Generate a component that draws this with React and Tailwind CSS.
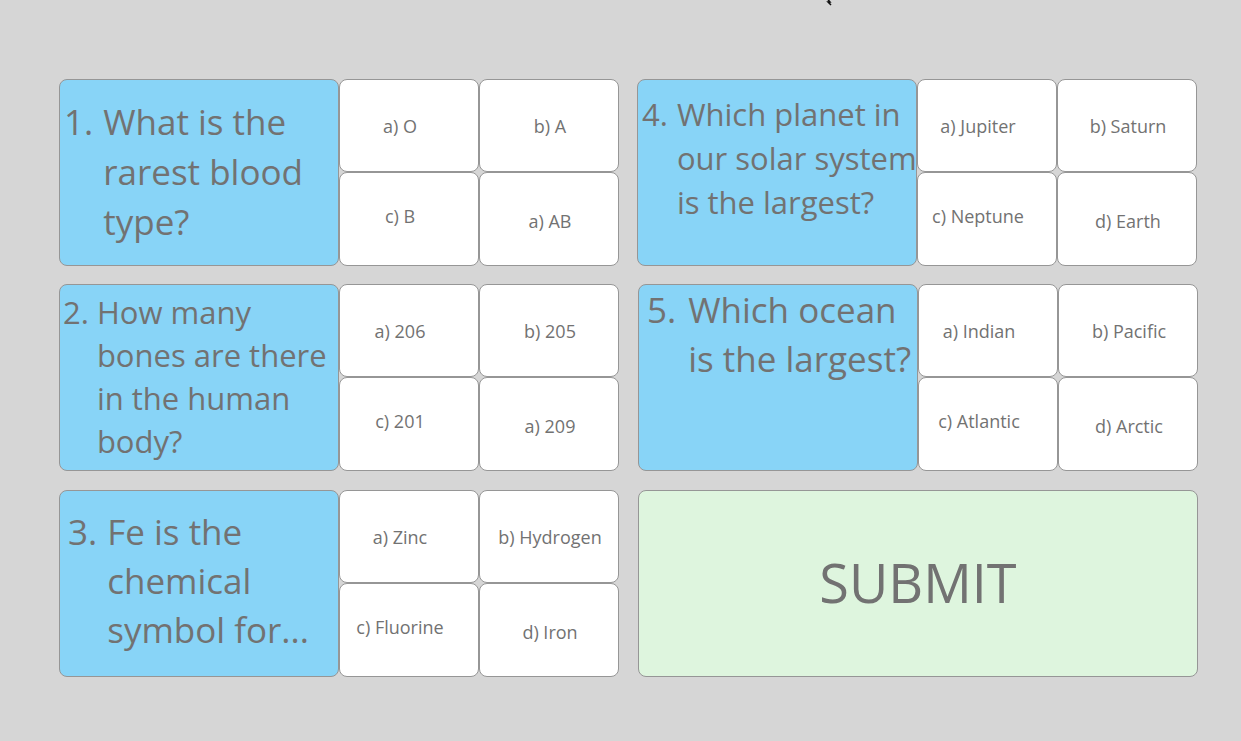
const quiz = [
  {
    n: '1.',
    lines: ['What is the', 'rarest blood', 'type?'],
    box: 'pl-[4px] pt-[17px] text-[35px] leading-[50px]',
    gap: 'gap-[10px]',
    answers: ['a) O', 'b) A', 'c) B', 'a) AB'],
  },
  {
    n: '4.',
    lines: ['Which planet in', 'our solar system', 'is the largest?'],
    box: 'pl-[4px] pt-[12px] text-[31px] leading-[44px]',
    gap: 'gap-[9px]',
    answers: ['a) Jupiter', 'b) Saturn', 'c) Neptune', 'd) Earth'],
  },
  {
    n: '2.',
    lines: ['How many', 'bones are there', 'in the human', 'body?'],
    box: 'pl-[3px] pt-[6px] text-[31px] leading-[43px]',
    gap: 'gap-[8px]',
    answers: ['a) 206', 'b) 205', 'c) 201', 'a) 209'],
  },
  {
    n: '5.',
    lines: ['Which ocean', 'is the largest?'],
    box: 'pl-[8px] pt-[0px] text-[35px] leading-[49px]',
    gap: 'gap-[12px]',
    answers: ['a) Indian', 'b) Pacific', 'c) Atlantic', 'd) Arctic'],
  },
  {
    n: '3.',
    lines: ['Fe is the', 'chemical', 'symbol for...'],
    box: 'pl-[8px] pt-[16px] text-[35px] leading-[49px]',
    gap: 'gap-[10px]',
    answers: ['a) Zinc', 'b) Hydrogen', 'c) Fluorine', 'd) Iron'],
  },
];

const answerPos = [
  'pr-[18px] pt-[2px]',
  'pl-[2px] pt-[2px]',
  'pr-[18px] pb-[6px]',
  'pl-[2px] pt-[4px]',
];

function Block({ item }) {
  return (
    <div className="flex h-[187px] w-[560px]">
      {/* question */}
      <div className={`w-[280px] h-full shrink-0 bg-[#88d4f7] border border-[#969696] rounded-[8px] flex whitespace-nowrap ${item.box} ${item.gap}`}>
        <span className="shrink-0">{item.n}</span>
        <div>
          {item.lines.map((l, i) => (
            <div key={i}>{l}</div>
          ))}
        </div>
      </div>
      {/* answers */}
      <div className="grid grid-cols-[140px_140px] grid-rows-[93px_94px] w-[280px]">
        {item.answers.map((a, i) => (
          <div
            key={i}
            className={`bg-white border border-[#969696] rounded-[8px] flex items-center justify-center text-[18px] ${answerPos[i]}`}
          >
            {a}
          </div>
        ))}
      </div>
    </div>
  );
}

export default function App() {
  return (
    <div
      className="relative w-[1241px] h-[741px] bg-[#d6d6d6] text-[#727272] overflow-hidden"
      style={{ fontFamily: '"Open Sans", "Noto Sans", sans-serif' }}
    >
      {/* cursor tip */}
      <svg className="absolute left-[824px] top-[-4px]" width="12" height="10" viewBox="0 0 12 10">
        <path d="M1 0 L6 6 L4 6 L7 9" fill="none" stroke="#111" strokeWidth="1.5" />
      </svg>

      <div className="pl-[59px] pt-[79px] flex flex-col gap-[18px]">
        <div className="flex gap-[18px]">
          <Block item={quiz[0]} />
          <Block item={quiz[1]} />
        </div>
        <div className="flex gap-[19px]">
          <Block item={quiz[2]} />
          <Block item={quiz[3]} />
        </div>
        <div className="flex gap-[19px] mt-[1px]">
          <Block item={quiz[4]} />
          <div className="w-[560px] h-[187px] bg-[#def5de] border border-[#969696] rounded-[8px] flex items-center justify-center text-[54px] pb-[3px]">
            SUBMIT
          </div>
        </div>
      </div>
    </div>
  );
}
